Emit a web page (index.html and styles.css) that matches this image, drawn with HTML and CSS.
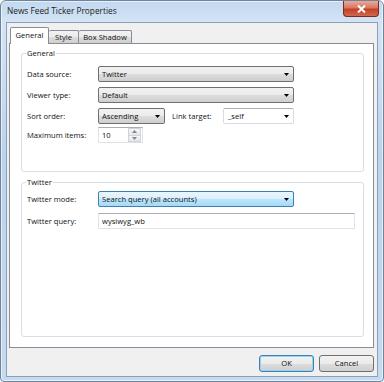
FILE: index.html
```html
<!DOCTYPE html>
<html lang="en">
<head>
    <meta charset="UTF-8">
    <title>News Feed Ticker Properties</title>
    <link rel="stylesheet" href="styles.css">
</head>
<body>
    <div class="window">
        <div class="titlebar">
            <span class="title">News Feed Ticker Properties</span>
            <span class="close">
                <svg width="9" height="8" viewBox="0 0 9 8"><path d="M1 0.5 L8 7.5 M8 0.5 L1 7.5" stroke="#fff" stroke-width="2"/></svg>
            </span>
        </div>
        <div class="client">
            <div class="tabs">
                <div class="tab active">General</div>
                <div class="tab style">Style</div>
                <div class="tab shadow">Box Shadow</div>
            </div>
            <div class="panel">
                <div class="group general">
                    <span class="legend">General</span>
                    <div class="rows">
                        <div class="row">
                            <span class="label">Data source:</span>
                            <div class="combo wide"><span>Twitter</span><svg class="arrow" width="5" height="3" viewBox="0 0 5 3"><path d="M0 0 H5 L2.5 3 Z"/></svg></div>
                        </div>
                        <div class="row">
                            <span class="label">Viewer type:</span>
                            <div class="combo wide"><span>Default</span><svg class="arrow" width="5" height="3" viewBox="0 0 5 3"><path d="M0 0 H5 L2.5 3 Z"/></svg></div>
                        </div>
                        <div class="row">
                            <span class="label">Sort order:</span>
                            <div class="combo sort"><span>Ascending</span><svg class="arrow" width="5" height="3" viewBox="0 0 5 3"><path d="M0 0 H5 L2.5 3 Z"/></svg></div>
                            <span class="label link">Link target:</span>
                            <div class="combo edit target"><span>_self</span><svg class="arrow" width="5" height="3" viewBox="0 0 5 3"><path d="M0 0 H5 L2.5 3 Z"/></svg></div>
                        </div>
                        <div class="row short">
                            <span class="label">Maximum items:</span>
                            <div class="spin">
                                <span class="value">10</span>
                                <div class="spin-btns">
                                    <span class="spin-btn"><svg width="5" height="3" viewBox="0 0 5 3"><path d="M0 3 H5 L2.5 0 Z"/></svg></span>
                                    <span class="spin-btn"><svg width="5" height="3" viewBox="0 0 5 3"><path d="M0 0 H5 L2.5 3 Z"/></svg></span>
                                </div>
                            </div>
                        </div>
                    </div>
                </div>
                <div class="group twitter">
                    <span class="legend">Twitter</span>
                    <div class="rows">
                        <div class="row">
                            <span class="label">Twitter mode:</span>
                            <div class="combo wide focused"><span>Search query (all accounts)</span><svg class="arrow" width="5" height="3" viewBox="0 0 5 3"><path d="M0 0 H5 L2.5 3 Z"/></svg></div>
                        </div>
                        <div class="row">
                            <span class="label">Twitter query:</span>
                            <div class="textbox">wysiwyg_wb</div>
                        </div>
                    </div>
                </div>
            </div>
            <div class="buttons">
                <div class="btn default">OK</div>
                <div class="btn">Cancel</div>
            </div>
        </div>
    </div>
</body>
</html>
```

FILE: styles.css
```css
* {
    margin: 0;
    padding: 0;
    box-sizing: border-box;
}

body {
    background: #fff;
    font-family: "Open Sans", "Noto Sans", sans-serif;
    font-size: 7.6px;
    color: #111;
}

.window {
    width: 384px;
    height: 382px;
    border: 1px solid #6d829c;
    border-radius: 6px 6px 4px 4px;
    background: linear-gradient(180deg, #c3d8ef 0%, #d4e4f5 6%, #bcd3ec 40%, #c6daf0 100%);
    padding: 0 5px 4px 5px;
    display: flex;
    flex-direction: column;
    box-shadow: inset 0 0 0 1px rgba(255, 255, 255, 0.6);
}

.titlebar {
    height: 21px;
    display: flex;
    align-items: flex-start;
}

.title {
    font-size: 8.3px;
    line-height: 20px;
    padding-left: 1px;
    color: #1a1a1a;
}

.close {
    margin-left: auto;
    margin-right: -1px;
    width: 36px;
    height: 16px;
    border: 1px solid #7a2a1f;
    border-top: none;
    border-radius: 0 0 4px 4px;
    background: linear-gradient(180deg, #e8a99c 0%, #d8785f 45%, #c24128 55%, #d2674d 100%);
    display: flex;
    align-items: center;
    justify-content: center;
}

.client {
    flex: 1;
    border: 1px solid #8b9fb8;
    background: #f0f0f0;
    display: flex;
    flex-direction: column;
}

/* tab strip */
.tabs {
    display: flex;
    align-items: flex-end;
    padding: 4px 0 0 3px;
    margin-bottom: -1px;
    position: relative;
    z-index: 1;
    height: 21px;
}

.tab {
    height: 13px;
    margin-bottom: 1px;
    border: 1px solid #898c95;
    border-bottom: none;
    border-left: none;
    border-radius: 2px 2px 0 0;
    background: linear-gradient(180deg, #f2f2f2 0%, #ebebeb 50%, #dddddd 50%, #cfcfcf 100%);
    line-height: 13px;
    text-align: center;
    white-space: nowrap;
}

.tab.style {
    width: 30px;
}

.tab.shadow {
    width: 53px;
}

.tab.active {
    width: 39px;
    height: 17px;
    margin-bottom: 0;
    border-left: 1px solid #898c95;
    background: #fff;
    line-height: 15px;
}

.panel {
    height: 305px;
    margin-left: 2px;
    width: 365px;
    border: 1px solid #898c95;
    background: #fff;
    padding: 9px 9px 0 11px;
}

/* group boxes */
.group {
    border: 1px solid #d5dfe5;
    border-radius: 3px;
    padding: 0 5px;
}

.group.general {
    height: 119px;
}

.group.twitter {
    height: 155px;
    margin-top: 10px;
}

.legend {
    display: block;
    width: max-content;
    margin-top: -6px;
    margin-left: -1px;
    padding: 0 1px;
    height: 11px;
    line-height: 11px;
    background: #fff;
}

.rows {
    display: flex;
    flex-direction: column;
    gap: 5px;
}

.general .rows {
    margin-top: 7px;
}

.twitter .rows {
    margin-top: 3px;
    gap: 6px;
}

.row {
    display: flex;
    align-items: center;
    height: 16px;
}

.row.short {
    margin-top: -2px;
}

.label {
    width: 71px;
    flex: none;
}

.label.link {
    width: 51px;
    margin-left: 7px;
}

/* controls */
.combo {
    height: 16px;
    border: 1px solid #707070;
    border-radius: 2px;
    background: linear-gradient(180deg, #f2f2f2 0%, #ebebeb 50%, #dddddd 50%, #cfcfcf 100%);
    display: flex;
    align-items: center;
    padding: 0 4px 0 3px;
    line-height: 14px;
}

.combo span {
    flex: 1;
}

.combo .arrow {
    fill: #000;
}

.combo.wide {
    width: 196px;
}

.combo.sort {
    width: 67px;
}

.combo.target {
    width: 71px;
}

.combo.edit {
    background: #fff;
    border-color: #d8dbe2;
    border-top-color: #abadb3;
    padding-left: 4px;
}

.combo.focused {
    border-color: #3c7fb1;
    background: linear-gradient(180deg, #eaf6fd 0%, #d9f0fc 50%, #bee6fd 50%, #a7d9f5 100%);
}

.spin {
    width: 45px;
    height: 16px;
    border: 1px solid #dfe2e8;
    border-top-color: #abadb3;
    background: #fff;
    display: flex;
    align-items: center;
    padding-left: 3px;
}

.spin .value {
    flex: 1;
}

.spin-btns {
    width: 13px;
    height: 14px;
    display: flex;
    flex-direction: column;
    margin-right: 1px;
}

.spin-btn {
    flex: 1;
    display: flex;
    align-items: center;
    justify-content: center;
    border: 1px solid #d0d4da;
    background: linear-gradient(180deg, #f6f6f6, #e6e6e6);
    fill: #7a889c;
}

.spin-btn + .spin-btn {
    border-top: none;
}

.textbox {
    width: 257px;
    height: 16px;
    border: 1px solid #e2e3ea;
    border-top-color: #abadb3;
    background: #fff;
    padding-left: 3px;
    line-height: 14px;
}

/* dialog buttons */
.buttons {
    display: flex;
    justify-content: flex-end;
    gap: 5px;
    margin-top: 7px;
    padding-right: 3px;
}

.btn {
    width: 55px;
    height: 17px;
    border: 1px solid #707070;
    border-radius: 3px;
    background: linear-gradient(180deg, #f2f2f2 0%, #ebebeb 50%, #dddddd 50%, #cfcfcf 100%);
    text-align: center;
    line-height: 15px;
}

.btn.default {
    border-color: #3c7fb1;
    box-shadow: inset 0 0 0 1px #9ad3f0;
}
```
